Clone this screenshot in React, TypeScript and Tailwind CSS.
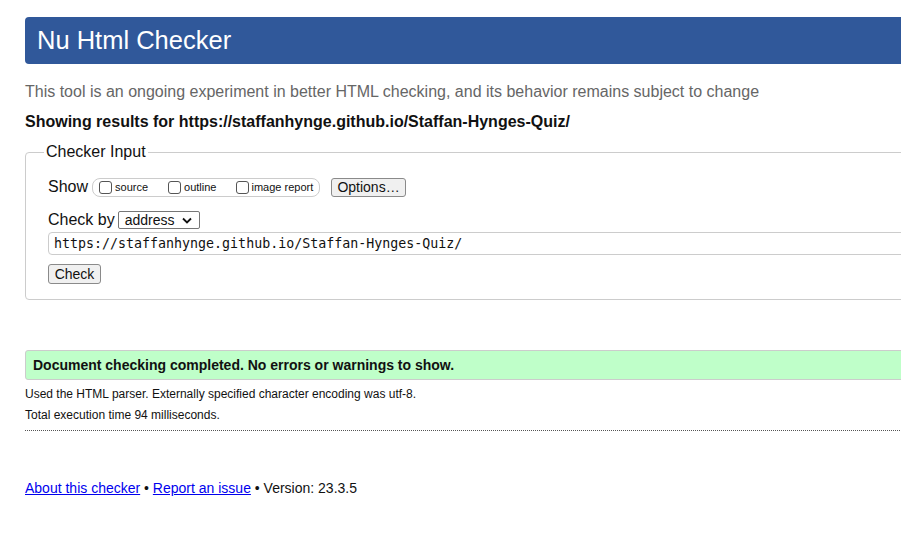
import React from "react";

/**
 * Nu Html Checker results page
 * Layout flows off the right edge, so the page is wider than the viewport.
 */
const App = () => {
  return (
    <div className="w-full h-[555px] overflow-hidden bg-white">
      <div className="w-[1000px] pl-[25px] pt-[17px] font-['Liberation_Sans',Arial,sans-serif] text-[#111]">
        {/* Header bar */}
        <div className="h-[47px] bg-[#30589a] rounded-l-[4px] flex items-center pl-[12px]">
          <h1 className="text-white text-[25.5px] leading-none">Nu Html Checker</h1>
        </div>

        <p className="mt-[18px] text-[16px] leading-[20px] text-[#666]">
          This tool is an ongoing experiment in better HTML checking, and its behavior remains subject to change
        </p>
        <p className="mt-[10px] text-[16px] leading-[20px] font-bold">
          Showing results for https://staffanhynge.github.io/Staffan-Hynges-Quiz/
        </p>

        {/* Checker Input */}
        <fieldset className="mt-[11px] border border-[#ccc] rounded-l-[4px] pl-[22px] pb-[13px]">
          <legend className="-ml-[4px] px-[2px] text-[16px] leading-[18px]">Checker Input</legend>

          <div className="flex items-center h-[20px] mt-[16px]">
            <span className="text-[16px]">Show</span>
            <div className="ml-[4px] flex items-center h-[19px] w-[228px] border border-[#ccc] rounded-[8px] px-[6px] text-[11px] whitespace-nowrap">
              <label className="flex items-center">
                <input type="checkbox" className="w-[13px] h-[13px] m-0 mr-[3px] appearance-none border border-[#555] rounded-[3px] bg-white" />
                source
              </label>
              <label className="flex items-center ml-[20px]">
                <input type="checkbox" className="w-[13px] h-[13px] m-0 mr-[3px] appearance-none border border-[#555] rounded-[3px] bg-white" />
                outline
              </label>
              <label className="flex items-center ml-[20px]">
                <input type="checkbox" className="w-[13px] h-[13px] m-0 mr-[2px] appearance-none border border-[#555] rounded-[3px] bg-white" />
                image report
              </label>
            </div>
            <button className="ml-[11px] h-[19px] w-[75px] border border-[#8a8a8a] rounded-[3px] bg-[#f0f0f0] text-[14px] leading-none">
              Options…
            </button>
          </div>

          <div className="flex items-center mt-[13px] h-[20px]">
            <span className="text-[16px]">Check by</span>
            <div className="ml-[3px] h-[18px] w-[82px] border border-[#767676] rounded-[2px] flex items-center justify-between px-[6px] text-[14px] bg-white">
              <span>address</span>
              <svg width="10" height="7" viewBox="0 0 10 7" className="mr-[1px]">
                <path d="M1 1.5 L5 5.5 L9 1.5" fill="none" stroke="#111" strokeWidth="1.8" />
              </svg>
            </div>
          </div>

          <div className="mt-[2px] h-[23px] border border-[#ccc] rounded-l-[4px] flex items-center pl-[5px] font-['DejaVu_Sans_Mono',monospace] text-[13.3px]">
            https://staffanhynge.github.io/Staffan-Hynges-Quiz/
          </div>

          <button className="mt-[9px] h-[20px] w-[53px] border border-[#8a8a8a] rounded-[3px] bg-[#f0f0f0] text-[14px] leading-none">
            Check
          </button>
        </fieldset>

        {/* Result */}
        <div className="mt-[50px] h-[30px] bg-[#bfffc9] border border-[#ccc] rounded-l-[3px] flex items-center pl-[7px] text-[14px] font-bold">
          Document checking completed. No errors or warnings to show.
        </div>
        <p className="mt-[7px] text-[12px] leading-[14px]">
          Used the HTML parser. Externally specified character encoding was utf-8.
        </p>
        <p className="mt-[7px] text-[12px] leading-[14px]">Total execution time 94 milliseconds.</p>
        <div className="mt-[8px] border-b border-dotted border-[#555]" />

        {/* Footer */}
        <p className="mt-[49px] text-[14px] leading-[16px]">
          <a href="#" className="text-[#00e] underline">About this checker</a>
          {" • "}
          <a href="#" className="text-[#00e] underline">Report an issue</a>
          {" • Version: 23.3.5"}
        </p>
      </div>
    </div>
  );
};

export default App;
